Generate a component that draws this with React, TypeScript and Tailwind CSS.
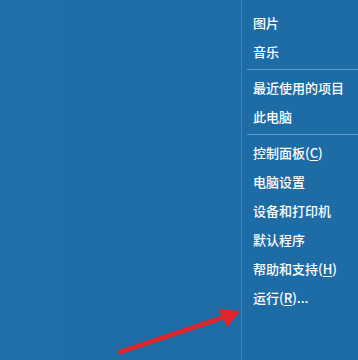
import type { ReactNode } from 'react';

type Item = { label: ReactNode };

const u = (c: string) => <span className="underline underline-offset-2">{c}</span>;

const GROUPS: Item[][] = [
  [{ label: '图片' }, { label: '音乐' }],
  [{ label: '最近使用的项目' }, { label: '此电脑' }],
  [
    { label: <>控制面板({u('C')})</> },
    { label: '电脑设置' },
    { label: '设备和打印机' },
    { label: '默认程序' },
    { label: <>帮助和支持({u('H')})</> },
    { label: <>运行({u('R')})...</> },
  ],
];

export default function App() {
  return (
    <div
      className="relative flex h-[360px] w-[358px] overflow-hidden bg-[#1e6ca6] text-white"
      style={{ fontFamily: '"Noto Sans CJK SC", "Noto Sans", sans-serif' }}
    >
      {/* desktop side */}
      <div className="w-[241px] bg-gradient-to-r from-[#2270aa] via-[#1e6ca6] to-[#1e6ca6]" />
      <div className="w-px bg-[#3a82ba]" />

      {/* right column of the start menu */}
      <div className="flex flex-1 flex-col pt-[8px]">
        {GROUPS.map((group, gi) => (
          <div key={gi}>
            {gi > 0 && <div className="my-[3px] ml-[5px] h-px bg-[#5b9bcf]" />}
            {group.map((item, ii) => (
              <div key={ii} className="flex h-[29px] items-center pl-[11px] text-[13px] font-medium leading-none">
                {item.label}
              </div>
            ))}
          </div>
        ))}
      </div>

      {/* red annotation arrow */}
      <svg className="pointer-events-none absolute inset-0" width="358" height="360" viewBox="0 0 358 360">
        <line x1="120" y1="352" x2="224" y2="317" stroke="#e0262b" strokeWidth="4.5" strokeLinecap="round" />
        <polygon points="218,309 240,311 227,327" fill="#e0262b" />
      </svg>
    </div>
  );
}
